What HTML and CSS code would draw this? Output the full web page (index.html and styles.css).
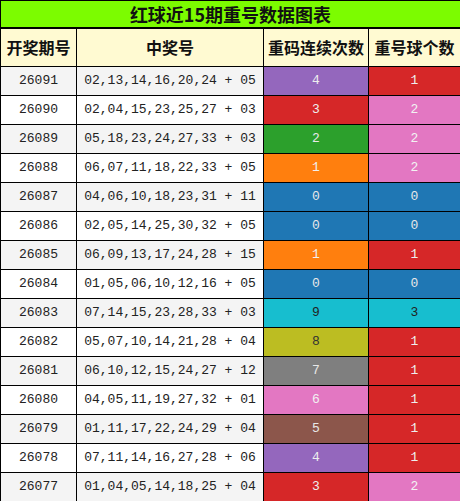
FILE: index.html
```html
<!DOCTYPE html>
<html>
<head>
    <meta charset="utf-8">
    <title>红球近15期重号数据图表</title>
    <link rel="stylesheet" href="styles.css">
</head>
<body>
    <table class="chart">
        <colgroup>
            <col class="col-issue">
            <col class="col-nums">
            <col class="col-streak">
            <col class="col-count">
        </colgroup>
        <tr class="title-row">
            <th colspan="4">红球近15期重号数据图表</th>
        </tr>
        <tr class="head-row">
            <th>开奖期号</th>
            <th>中奖号</th>
            <th>重码连续次数</th>
            <th>重号球个数</th>
        </tr>
        <tr class="row"><td>26091</td><td>02,13,14,16,20,24 + 05</td><td class="c-purple">4</td><td class="c-red">1</td></tr>
        <tr class="row"><td>26090</td><td>02,04,15,23,25,27 + 03</td><td class="c-red">3</td><td class="c-pink">2</td></tr>
        <tr class="row"><td>26089</td><td>05,18,23,24,27,33 + 03</td><td class="c-green">2</td><td class="c-pink">2</td></tr>
        <tr class="row"><td>26088</td><td>06,07,11,18,22,33 + 05</td><td class="c-orange">1</td><td class="c-pink">2</td></tr>
        <tr class="row"><td>26087</td><td>04,06,10,18,23,31 + 11</td><td class="c-blue">0</td><td class="c-blue">0</td></tr>
        <tr class="row"><td>26086</td><td>02,05,14,25,30,32 + 05</td><td class="c-blue">0</td><td class="c-blue">0</td></tr>
        <tr class="row"><td>26085</td><td>06,09,13,17,24,28 + 15</td><td class="c-orange">1</td><td class="c-red">1</td></tr>
        <tr class="row"><td>26084</td><td>01,05,06,10,12,16 + 05</td><td class="c-blue">0</td><td class="c-blue">0</td></tr>
        <tr class="row"><td>26083</td><td>07,14,15,23,28,33 + 03</td><td class="c-cyan">9</td><td class="c-cyan">3</td></tr>
        <tr class="row"><td>26082</td><td>05,07,10,14,21,28 + 04</td><td class="c-olive">8</td><td class="c-red">1</td></tr>
        <tr class="row"><td>26081</td><td>06,10,12,15,24,27 + 12</td><td class="c-gray">7</td><td class="c-red">1</td></tr>
        <tr class="row"><td>26080</td><td>04,05,11,19,27,32 + 01</td><td class="c-pink">6</td><td class="c-red">1</td></tr>
        <tr class="row"><td>26079</td><td>01,11,17,22,24,29 + 04</td><td class="c-brown">5</td><td class="c-red">1</td></tr>
        <tr class="row"><td>26078</td><td>07,11,14,16,27,28 + 06</td><td class="c-purple">4</td><td class="c-red">1</td></tr>
        <tr class="row"><td>26077</td><td>01,04,05,14,18,25 + 04</td><td class="c-red">3</td><td class="c-pink">2</td></tr>
    </table>
</body>
</html>
```

FILE: styles.css
```css
* {
    margin: 0;
    padding: 0;
    box-sizing: border-box;
}

body {
    background: #ffffff;
    font-family: "Liberation Mono", monospace;
}

.chart {
    width: 460px;
    border-collapse: collapse;
    table-layout: fixed;
    border: 1px solid #000;
}

.chart th,
.chart td {
    border: 1px solid #000;
    text-align: center;
    padding: 0;
    white-space: nowrap;
    overflow: hidden;
}

.col-issue { width: 76px; }
.col-nums { width: 187px; }
.col-streak { width: 105px; }
.col-count { width: 92px; }

.title-row th {
    height: 26px;
    background: #7cfc00;
    font-family: "Noto Sans CJK SC", sans-serif;
    font-size: 18px;
    font-weight: bold;
    color: #111;
    border-bottom-width: 2px;
}

.head-row th {
    height: 38px;
    background: #fffad2;
    font-family: "Noto Sans CJK SC", sans-serif;
    font-size: 16px;
    font-weight: bold;
    color: #111;
}

.row td {
    height: 29px;
    font-size: 13px;
    color: #222;
    background: #ffffff;
}

.row:nth-child(odd) td {
    background: #f4f4f4;
}

/* value colours */
.row td.c-blue { background: #1f77b4; color: #e8e8e8; }
.row td.c-orange { background: #ff7f0e; color: #f0f0f0; }
.row td.c-green { background: #2ca02c; color: #e8e8e8; }
.row td.c-red { background: #d62728; color: #eeeeee; }
.row td.c-purple { background: #9467bd; color: #eeeeee; }
.row td.c-brown { background: #8c564b; color: #e8e8e8; }
.row td.c-pink { background: #e377c2; color: #f2f2f2; }
.row td.c-gray { background: #7f7f7f; color: #e8e8e8; }
.row td.c-olive { background: #bcbd22; color: #333333; }
.row td.c-cyan { background: #17becf; color: #222222; }
```
